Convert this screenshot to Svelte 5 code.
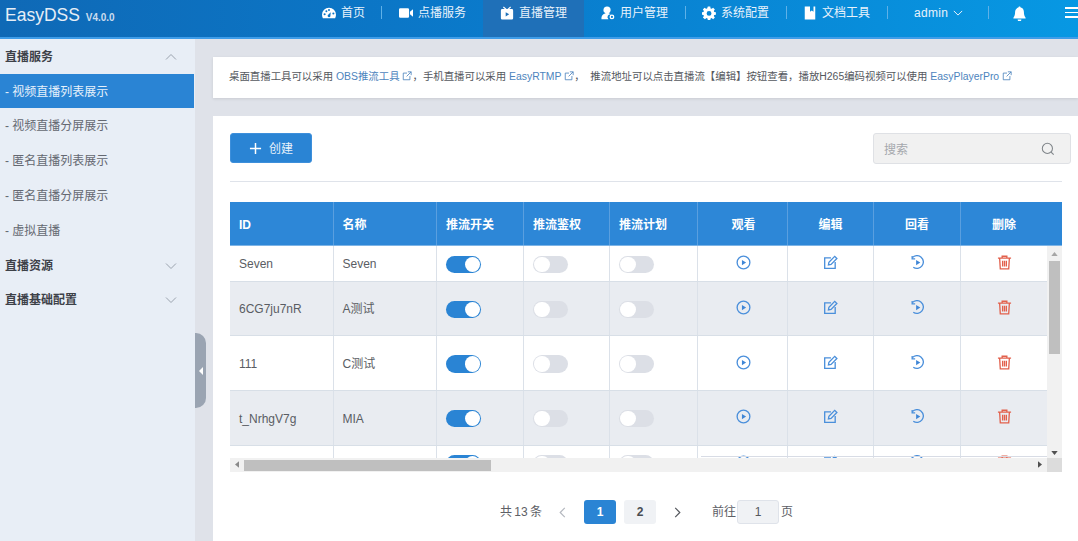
<script>
  const nav = [
    { t: '首页', i: 'home', w: 61, p: 1, line: true },
    { t: '点播服务', i: 'video', w: 101, p: 17 },
    { t: '直播管理', i: 'tv', w: 101, p: 17, active: true },
    { t: '用户管理', i: 'user', w: 102, p: 17, line: true },
    { t: '系统配置', i: 'gear', w: 101, p: 16, line: true },
    { t: '文档工具', i: 'doc', w: 101, p: 16, line: true }
  ];
  const subs = ['视频直播列表展示', '视频直播分屏展示', '匿名直播列表展示', '匿名直播分屏展示', '虚拟直播'];
  const heads = ['ID', '名称', '推流开关', '推流鉴权', '推流计划', '观看', '编辑', '回看', '删除'];
  const rows = [
    { id: 'Seven', name: 'Seven', cls: 'short' },
    { id: '6CG7ju7nR', name: 'A测试', cls: 'alt' },
    { id: '111', name: 'C测试', cls: '' },
    { id: 't_NrhgV7g', name: 'MIA', cls: 'alt' },
    { id: '', name: '', cls: 'last' }
  ];
</script>

{#snippet ext()}
  <svg class="ext" viewBox="0 0 12 12" aria-hidden="true"><path d="M6 2.500H1.500v8h8V6M7 1h4v4M11 1 5.500 6.500" fill="none" stroke="currentColor" stroke-width="1"/></svg>
{/snippet}

{#snippet navIcon(name)}
  <svg class="nav-icon" viewBox="0 0 16 16" aria-hidden="true">
    {#if name === 'home'}
      <path fill="#fff" fill-rule="evenodd" d="M8 2a8 8 0 0 0-8 8c0 1.500.4 2.800 1 4h14c.6-1.200 1-2.500 1-4a8 8 0 0 0-8-8ZM3 10.700a1.200 1.200 0 1 1 0-2.400 1.200 1.200 0 0 1 0 2.400Zm2-3.700a1.100 1.100 0 1 1 0-2.200 1.100 1.100 0 0 1 0 2.200Zm3-1.300a1.100 1.100 0 1 1 0-2.200 1.100 1.100 0 0 1 0 2.200Zm1.500 6.300a1.700 1.700 0 0 1-3-1.500l3.500-3.500-.5 5Zm3.500-2.300a1.200 1.200 0 1 1 0-2.400 1.200 1.200 0 0 1 0 2.400Z"/>
    {:else if name === 'video'}
      <path fill="#fff" d="M1.500 2.500h8.500a1.500 1.500 0 0 1 1.500 1.500v8a1.500 1.500 0 0 1-1.500 1.500H1.500A1.500 1.500 0 0 1 0 12V4a1.500 1.500 0 0 1 1.500-1.500ZM12.500 6.500 16 3.800v8.400l-3.500-2.700Z"/>
    {:else if name === 'tv'}
      <path fill="#fff" d="M4.300.6 7.600 3.500h.9L11.700.6l.9 1L10.500 3.500h3a1.500 1.500 0 0 1 1.500 1.500v9a1.500 1.500 0 0 1-1.500 1.500h-11A1.500 1.500 0 0 1 1 14V5a1.500 1.500 0 0 1 1.500-1.500h3L3.400 1.600Z"/>
      <path fill="#1f70b8" d="m6.500 7 4 2.500-4 2.500Z"/>
    {:else if name === 'user'}
      <path fill="#fff" d="M7 .5a4 4 0 0 1 4 4c0 1.600-1 3-2.300 3.700 1 .3 1.900.7 2.700 1.300a3.200 3.200 0 0 0-2.900 5.500H.5c-.4-3.500 1.600-6 4.800-6.800A4 4 0 0 1 7 .5Z"/>
      <circle cx="12.500" cy="12.500" r="2" fill="none" stroke="#fff" stroke-width="1.500"/>
    {:else if name === 'gear'}
      <path fill="#fff" fill-rule="evenodd" d="M6.500 0h3l.4 2.200 1.300.6L13.100 1.500l2.100 2.100-1.300 1.900.6 1.300L16.500 7v3l-2.100.3-.5 1.300 1.300 1.900-2.100 2.100-1.900-1.300-1.300.5-.4 2.200h-3l-.4-2.200-1.300-.5-1.900 1.300L.3 13.500l1.300-1.900-.5-1.300L-1 10V7l2.100-.3.5-1.300L.3 3.600l2.100-2.100 1.900 1.300 1.300-.6ZM8 5.500a3 3 0 1 0 0 6 3 3 0 0 0 0-6Z" transform="translate(.7 .7) scale(.92)"/>
    {:else if name === 'doc'}
      <path fill="#fff" fill-rule="evenodd" d="M2 .5h12v15H2ZM8 .5v6l2-1.500 2 1.500v-6Z"/>
    {:else if name === 'bell'}
      <path fill="#fff" d="M8 .5c.7 0 1.200.5 1.200 1.200 2.300.5 3.500 2.500 3.500 4.800 0 3 .6 4.500 1.800 6v.7H1.500v-.7c1.200-1.500 1.800-3 1.800-6 0-2.300 1.200-4.300 3.500-4.800C6.800 1 7.300.5 8 .5ZM6 14.500h4a2 2 0 0 1-4 0Z"/>
    {/if}
  </svg>
{/snippet}

{#snippet chevron(dir, cls)}
  <svg class={cls} viewBox="0 0 12 12" aria-hidden="true">
    {#if dir === 'down'}<path d="m1 3.500 5 5 5-5"/>{/if}
    {#if dir === 'up'}<path d="m1 8.500 5-5 5 5"/>{/if}
    {#if dir === 'left'}<path d="M8.500 1 3.500 6l5 5"/>{/if}
    {#if dir === 'right'}<path d="m3.500 1 5 5-5 5"/>{/if}
  </svg>
{/snippet}

<div class="page">
  <header class="top">
    <div class="brand">EasyDSS <small>V4.0.0</small></div>
    <nav class="nav">
      {#each nav as n}
        <div class="nav-item" class:active={n.active} class:line={n.line} style="width:{n.w}px;padding-left:{n.p}px">
          {@render navIcon(n.i)}<span>{n.t}</span>
        </div>
      {/each}
      <div class="nav-item line admin"><span>admin</span>{@render chevron('down', 'admin-chev')}</div>
      <div class="nav-item bell">{@render navIcon('bell')}</div>
      <div class="burger"><i></i><i></i><i></i></div>
    </nav>
  </header>

  <div class="body">
    <aside class="side">
      <div class="group">直播服务 {@render chevron('up', 'side-chev')}</div>
      {#each subs as s, i}
        <div class="sub" class:on={i === 0}>- {s}</div>
      {/each}
      <div class="group">直播资源 {@render chevron('down', 'side-chev')}</div>
      <div class="group">直播基础配置 {@render chevron('down', 'side-chev')}</div>
    </aside>
    <div class="handle"><span></span></div>

    <main class="main">
      <section class="notice">
        桌面直播工具可以采用&nbsp;<span class="link">OBS推流工具 {@render ext()}</span>，手机直播可以采用&nbsp;<span class="link">EasyRTMP {@render ext()}</span>，&nbsp;&nbsp;推流地址可以点击直播流【编辑】按钮查看，播放H265编码视频可以使用&nbsp;<span class="link">EasyPlayerPro {@render ext()}</span>
      </section>

      <section class="card">
        <div class="tools">
          <button class="create"><svg viewBox="0 0 14 14" aria-hidden="true"><path d="M7 1v12M1 7h12"/></svg>创建</button>
          <div class="search">
            <span>搜索</span>
            <svg viewBox="0 0 16 16" aria-hidden="true"><circle cx="7.300" cy="7.300" r="5.800"/><path d="m11.500 11.500 3 3"/></svg>
          </div>
        </div>

        <div class="table">
          <div class="thead">
            {#each heads as h, i}
              <div class="th" class:mid={i > 4}>{h}</div>
            {/each}
          </div>
          <div class="tscroll">
            <div class="tbody">
              {#each rows as r}
                <div class="tr {r.cls}">
                  <div class="td">{r.id}</div>
                  <div class="td">{r.name}</div>
                  <div class="td"><span class="sw on"></span></div>
                  <div class="td"><span class="sw"></span></div>
                  <div class="td"><span class="sw"></span></div>
                  <div class="td mid">
                    <svg class="ic blue" viewBox="0 0 16 16" aria-hidden="true"><circle cx="8" cy="8" r="6.800"/><path class="fill" d="m6.300 5.200 4.500 2.800-4.500 2.800Z"/></svg>
                  </div>
                  <div class="td mid">
                    <svg class="ic blue" viewBox="0 0 16 16" aria-hidden="true"><path d="M8.500 3H1.800v11.200H13V7.500"/><path d="m5.800 10.500.5-2.800L12.500 1.500l2.300 2.300-6.200 6.200Z"/></svg>
                  </div>
                  <div class="td mid">
                    <svg class="ic blue" viewBox="0 0 16 16" aria-hidden="true"><path d="M2.500 2.800A6.800 6.800 0 1 1 3.500 13"/><path d="M2.300 1v3.200h3.200"/><path class="fill" d="m6.500 5.200 4.500 2.800-4.500 2.800Z"/></svg>
                  </div>
                  <div class="td mid">
                    <svg class="ic red" viewBox="0 0 16 16" aria-hidden="true"><path d="M1 3.300h14M5.500 3.300V1.300h5v2M2.800 3.300l.7 11.400h9l.7-11.400M6 6v6.300M8 6v6.300M10 6v6.300"/></svg>
                  </div>
                </div>
              {/each}
            </div>
            <div class="vbar">
              <svg viewBox="0 0 8 5" class="arr up" aria-hidden="true"><path d="M4 0 8 5H0Z"/></svg>
              <div class="vthumb"></div>
              <svg viewBox="0 0 8 5" class="arr down" aria-hidden="true"><path d="M0 0h8L4 5Z"/></svg>
            </div>
          </div>
          <div class="hbar">
            <svg viewBox="0 0 5 8" class="arr-h" aria-hidden="true"><path d="M5 0v8L0 4Z"/></svg>
            <div class="hthumb"></div>
            <svg viewBox="0 0 5 8" class="arr-h right" aria-hidden="true"><path d="M0 0v8l5-4Z"/></svg>
            <div class="corner"></div>
          </div>
        </div>

        <div class="pager">
          <span class="total">共 13 条</span>
          {@render chevron('left', 'pg-chev dim')}
          <span class="pg cur">1</span>
          <span class="pg">2</span>
          {@render chevron('right', 'pg-chev')}
          <span class="goto">前往</span>
          <span class="jump">1</span>
          <span class="ye">页</span>
        </div>
      </section>
    </main>
  </div>
</div>

<style>
  :global(body) { margin: 0; background: #dfe2e9; }
  .page {
    width: 1078px; height: 541px; overflow: hidden; position: relative;
    display: flex; flex-direction: column;
    font-family: "Liberation Sans", "Noto Sans CJK SC", sans-serif;
    font-size: 12px; line-height: 16px; color: #5d6066;
  }
  .top {
    height: 37px; flex: none; display: flex; align-items: stretch; justify-content: space-between;
    background: linear-gradient(90deg, #0f69b6 0%, #0a7acb 45%, #0798e3 100%);
    border-bottom: 2px solid #3f9de9; color: #fff;
  }
  .brand { padding: 0 0 0 5px; font-size: 17.500px; line-height: 30px; color: #e6eef6; }
  .brand small { font-size: 10px; font-weight: 700; color: #cbdcee; margin-left: 1px; }
  .nav { display: flex; align-items: stretch; }
  .nav-item {
    display: flex; align-items: center; justify-content: flex-start; gap: 5px;
    position: relative; color: #e8f2fb; height: 37px; padding-bottom: 11px; box-sizing: border-box;
  }
  .nav-item.active { background: #1f70b8; }
  .nav-item.line::after {
    content: ""; position: absolute; right: 0; top: 6px; height: 13px; width: 1px; background: #5fb1e8;
  }
  .nav-icon { width: 14px; height: 14px; flex: none; }
  .admin { width: 101px; padding-left: 26px; letter-spacing: .3px; }
  :global(.admin-chev) { width: 10px; height: 10px; fill: none; stroke: #e8f2fb; stroke-width: 1.200; }
  .bell { width: 46px; padding-left: 23px; }
  .bell .nav-icon { width: 15px; height: 15px; }
  .burger { width: 43px; display: flex; flex-direction: column; gap: 3px; padding: 7px 0 0 30px; box-sizing: border-box; overflow: hidden; }
  .burger i { display: block; height: 1.500px; width: 14px; flex: none; background: #fff; }

  .body { flex: 1; display: flex; min-height: 0; position: relative; }
  .side { width: 195px; flex: none; background: #e8eef6; }
  .group {
    height: 34.600px; box-sizing: border-box; padding: 2px 18px 0 5px; display: flex; align-items: center; justify-content: space-between;
    font-weight: 700; color: #3d4148;
  }
  .sub { height: 34.800px; line-height: 37px; padding-left: 5px; color: #646871; }
  .sub.on { background: #2a84d4; color: #e6f1fb; margin-right: 1px; }
  :global(.side-chev) { width: 12px; height: 12px; fill: none; stroke: #9ba3ae; stroke-width: 1; }
  .handle {
    position: absolute; left: 195px; top: 294px; width: 11px; height: 75px;
    background: #9aa4b2; border-radius: 0 10px 10px 0;
    display: flex; align-items: center; justify-content: center;
  }
  .handle span { border: 4px solid transparent; border-right: 4px solid #fff; border-left: 0; }

  .main { flex: 1; min-width: 0; padding: 18px 0 0 18px; display: flex; flex-direction: column; gap: 18px; }
  .notice {
    height: 41px; flex: none; background: #fff; padding-left: 16px; line-height: 39px; font-size: 10.420px;
    color: #55585e; white-space: nowrap; box-shadow: 0 1px 3px rgba(0,0,0,.1);
  }
  .link { color: #4d84bd; }
  .ext { width: 10px; height: 10px; vertical-align: -1px; }

  .card { flex: 1; background: #fff; padding: 17px 16px 0 17px; min-height: 0; }
  .tools {
    display: flex; justify-content: space-between; align-items: flex-start;
    height: 48px; margin-bottom: 20px; border-bottom: 1px solid #dfe3ea; 
  }
  .create {
    width: 82px; height: 30px; border: 1px solid #3d8fdb; border-radius: 3px; background: #2a84d4; color: #e8f2fb;
    font: inherit; display: flex; align-items: center; justify-content: center; gap: 7px; padding: 2px 0 0;
  }
  .create svg { width: 13px; height: 13px; fill: none; stroke: #fff; stroke-width: 1.600; margin-bottom: 2px; }
  .search {
    width: 198px; height: 31px; box-sizing: border-box; margin-right: -9px; padding: 0 15px 0 10px;
    background: #f1f1f1; border: 1px solid #dfe1e5; border-radius: 3px;
    display: flex; align-items: center; justify-content: space-between; color: #a5a8ad;
  }
  .search span { padding-top: 2px; }
  .search svg { width: 14px; height: 14px; fill: none; stroke: #7f8489; stroke-width: 1.200; }

  .table { width: 832px; }
  .thead, .tr { display: grid; grid-template-columns: 103.500px 103.500px 87px 86px 88px 90px 86px 87px 86px; }
  .thead {
    height: 44px; background: #2d87d7; color: #fff; font-weight: 700; border-bottom: 1px solid #7db4e6; box-sizing: border-box;
    padding-right: 15px;
  }
  .th { display: flex; align-items: center; padding: 2px 0 0 9px; border-right: 1px solid #5a9fdf; }
  .th:nth-child(9) { border-right: 0; }
  .th.mid { justify-content: center; padding-left: 0; }
  .th:nth-child(6) { padding-left: 2px; }
  .tscroll { display: flex; height: 212px; overflow: hidden; }
  .tbody { flex: 1; min-width: 0; overflow: hidden; position: relative; }
  .tbody::after {
    content: ""; position: absolute; left: 471px; right: 0; bottom: 1px; height: 1px; background: #d8dce5;
  }
  .tr { background: #fff; border-bottom: 1px solid #d8dfe7; box-sizing: border-box; height: 54.700px; }
  .tr.short { height: 35.500px; }
  .tr.alt { background: #e9ecf1; }
  .tr.last { height: 60px; }
  .td { display: flex; align-items: center; padding: 2px 0 0 9px; border-right: 1px solid #dbe1e9; font-size: 12px; color: #5a5d63; }
  .td:nth-child(9) { border-right: 0; }
  .td.mid { justify-content: center; padding: 0; }
  .td:nth-child(6) { padding-left: 2px; }
  .tr.last .td { align-items: flex-start; padding-top: 9px; }
  .sw { width: 35px; height: 17.500px; border-radius: 9px; background: #dcdfe6; position: relative; display: block; }
  .sw::after {
    content: ""; position: absolute; left: 1px; top: 1px; width: 15.500px; height: 15.500px; border-radius: 50%; background: #fff;
  }
  .sw.on { background: #2a84d4; }
  .sw.on::after { left: auto; right: 1px; }
  .ic { width: 15px; height: 15px; fill: none; stroke-width: 1.400; margin-bottom: 2px; }
  .ic.blue { stroke: #4a8fdb; }
  .ic.red { stroke: #e2604c; }
  .ic .fill { fill: #3f86d6; stroke: none; }

  .vbar {
    width: 15px; flex: none; background: #f1f1f1; position: relative;
    display: flex; flex-direction: column; align-items: center; padding-top: 15px; box-sizing: border-box;
  }
  .vthumb { width: 11px; height: 93px; background: #bfbfbf; }
  .arr { position: absolute; left: 4px; width: 7px; height: 4px; fill: #6e6e6e; }
  .arr.up { top: 6px; fill: #a6a6a6; }
  .arr.down { bottom: 3px; fill: #505050; }
  .hbar { height: 14px; background: #f1f1f1; position: relative; display: flex; align-items: center; }
  .hthumb { width: 247px; height: 11px; margin-left: 14px; background: #bfbfbf; }
  .arr-h { position: absolute; left: 5px; top: 3px; width: 4px; height: 7px; fill: #8a8a8a; }
  .arr-h.right { left: auto; right: 20px; fill: #505050; }
  .corner { position: absolute; right: 0; top: 0; width: 15px; height: 14px; background: #dcdcdc; }

  .pager { display: flex; align-items: center; height: 24px; margin-top: 28px; padding-left: 270px; color: #5d6066; }
  .total { width: 57px; word-spacing: -1px; }
  :global(.pg-chev) { width: 11px; height: 11px; fill: none; stroke: #55585e; stroke-width: 1.300; flex: none; }
  :global(.pg-chev.dim) { stroke: #b4b8bf; }
  .pg {
    width: 32px; height: 24px; box-sizing: border-box; border-radius: 3px; background: #f0f2f5; color: #4a4d52;
    display: flex; align-items: center; justify-content: center; font-weight: 700; margin-right: 8px;
  }
  .pg.cur { background: #2a84d4; color: #fff; margin-left: 16px; }
  .pg + :global(.pg-chev) { margin-left: 8px; }
  .goto { margin-left: 29px; margin-right: 1px; }
  .jump {
    width: 42px; height: 24px; box-sizing: border-box; border: 1px solid #dfe3ea; border-radius: 3px; background: #f0f2f5;
    display: flex; align-items: center; justify-content: center; color: #55585e;
  }
  .ye { margin-left: 2px; }
</style>
